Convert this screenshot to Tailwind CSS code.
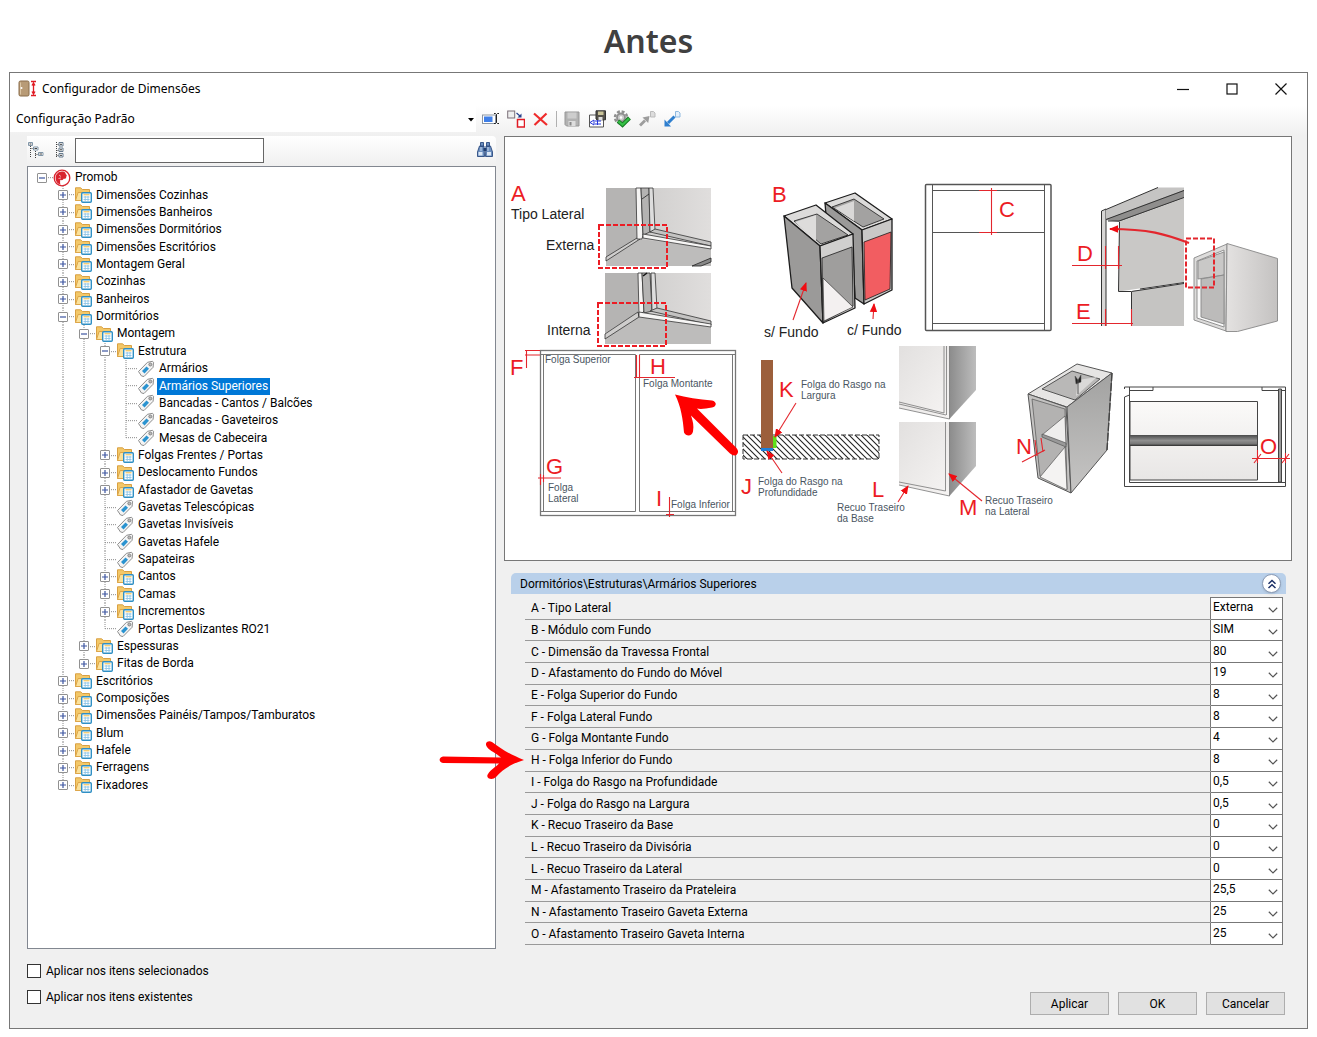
<!DOCTYPE html>
<html lang="pt-BR">
<head>
  <meta charset="UTF-8" />
  <meta name="viewport" content="width=device-width, initial-scale=1.0" />
  <title>Configurador de Dimensões</title>
  <script src="https://cdn.jsdelivr.net/npm/@tailwindcss/browser@4"></script>
</head>
<body class="bg-white font-[Roboto,sans-serif] text-[12px] text-black">

  <!-- Shared icons -->
  <svg class="hidden" aria-hidden="true">
    <symbol id="icon-folder" viewBox="0 0 18 18">
      <path d="M1.5 14.5V1.8h5.2l1.6 1.7h7.2v11z" fill="#f3c869" stroke="#d9a042" />
      <path d="M1.5 14.5l2.6-8h12.4l-2 8z" fill="#fbe19a" stroke="#dda64a" />
      <rect x="7.7" y="6.7" width="9.6" height="9.6" rx="1" fill="#fff" stroke="#2f8fc4" stroke-width="1.4" />
      <path d="M9.5 11h6M9.5 13.500h6M11.2 10v5.500M14 10v5.500" stroke="#8cc4e6" stroke-width=".9" />
      <path d="M9.5 8.8h6" stroke="#f0b93c" />
    </symbol>
    <symbol id="icon-tag" viewBox="0 0 18 18">
      <path d="M1.5 11.5L10.5 2.3l5-1 1 1-.4 5L7 16.5 4.5 16z" fill="#f4f4f4" stroke="#8d8d8d" />
      <path d="M5 11l4.5-4.6 2.5 2.4L7.5 13.5z" fill="#2a93d0" />
      <circle cx="13.3" cy="4.5" r="1.5" fill="#bbb" stroke="#777" stroke-width=".8" />
    </symbol>
    <symbol id="icon-root" viewBox="0 0 18 18">
      <circle cx="9" cy="9" r="7.8" fill="#fff" stroke="#d9232e" stroke-width="1.3" />
      <path d="M10 2.500C6 1.800 2.600 4.800 2.600 9c0 3.600 2.300 6 4.900 6.500-.8-1.800-.2-3.200-.2-4.700 1.700.8 3 .2 3.200-1 2 .2 3-.7 2.700-2 1-1 .6-2-.4-2.600C12.500 3.500 11.500 2.700 10 2.500z" fill="#d9232e" />
      <path d="M6 6l2 1.500M5.500 9.500l2.500-.5" stroke="#fff" stroke-width=".6" />
    </symbol>
    <symbol id="icon-chevron" viewBox="0 0 10 6">
      <path d="M.8.8L5 4.900 9.200.8" fill="none" stroke="#555" stroke-width="1.200" />
    </symbol>
  </svg>

  <h1 class="h-[72px] pt-[18px] pr-[20px] text-center font-['Noto_Sans',sans-serif] text-[32px] leading-[46px] font-semibold text-[#404040]">Antes</h1>

  <main class="mx-[9px] flex flex-col border border-[#777] bg-[#f0f0f0]">

    <header class="flex h-[32px] items-center bg-white pl-[8px] font-['Noto_Sans',sans-serif]">
      <svg class="h-[18px] w-[20px]" viewBox="0 0 20 18" aria-hidden="true">
        <rect x="1" y="1" width="10" height="15" rx="1.500" fill="#b89b76" stroke="#8a6d4a" />
        <path d="M2.500 2.500v12" stroke="#dcc7a6" />
        <circle cx="3.500" cy="8" r="1" fill="#fff" />
        <path d="M13 1.500h5M13 15.500h5M15.500 3v11M14 5.500L15.500 3 17 5.500M14 11.500l1.500 2.500 1.500-2.500" fill="none" stroke="#e01b24" stroke-width="1.300" />
      </svg>
      <h2 class="ml-[4px] text-[12px]">Configurador de Dimensões</h2>
      <div class="ml-auto flex pr-[2px]">
        <button class="grid h-[32px] w-[49px] place-items-center" aria-label="Minimizar">
          <svg class="size-[12px]" viewBox="0 0 12 12"><path d="M0 6.500h12" stroke="#111" stroke-width="1.200" /></svg>
        </button>
        <button class="grid h-[32px] w-[49px] place-items-center" aria-label="Maximizar">
          <svg class="size-[12px]" viewBox="0 0 12 12"><rect x="1" y="1" width="10" height="10" fill="none" stroke="#111" stroke-width="1.200" /></svg>
        </button>
        <button class="grid h-[32px] w-[49px] place-items-center" aria-label="Fechar">
          <svg class="size-[12px]" viewBox="0 0 12 12"><path d="M.5.5l11 11M11.500.5l-11 11" stroke="#111" stroke-width="1.200" /></svg>
        </button>
      </div>
    </header>

    <div class="flex h-[31px] items-center bg-linear-to-b from-white to-[#f0f0f0] pb-[3px]">
      <div class="relative h-[26px] w-[466px] bg-white">
        <select class="size-full appearance-none bg-transparent pl-[6px] font-['Noto_Sans',sans-serif] text-[12px]" aria-label="Configuração">
          <option>Configuração Padrão</option>
        </select>
        <svg class="pointer-events-none absolute top-[12px] right-[2px] h-[4px] w-[6px]" viewBox="0 0 6 4"><path d="M0 0h6L3 3.500z" /></svg>
      </div>
      <div class="flex items-center gap-[7px] pl-[6px]">
        <button aria-label="Renomear">
          <svg class="size-[18px]" viewBox="0 0 18 18">
            <rect x=".5" y="5" width="13" height="8.500" fill="#fff" stroke="#8b95a2" /><rect x="2" y="6.500" width="8.500" height="5.500" fill="#3f7fe8" />
            <path d="M12 3.500h1.500l1 1 1-1H17M12 13.500h1.500l1-1 1 1H17M14.500 4.500v8" stroke="#222" fill="none" />
          </svg>
        </button>
        <button aria-label="Duplicar">
          <svg class="size-[18px]" viewBox="0 0 18 18">
            <rect x=".7" y="1" width="7" height="7" fill="#eee" stroke="#7a6f78" />
            <rect x="10.500" y="9.500" width="7" height="7.500" fill="#fff" stroke="#e01b24" stroke-width="1.500" />
            <path d="M9.500 3l3.500 3" stroke="#27408b" stroke-width="1.200" /><path d="M14.500 3.500v4h-4z" fill="#27408b" />
          </svg>
        </button>
        <button aria-label="Excluir">
          <svg class="size-[18px]" viewBox="0 0 18 18"><path d="M2 3.500l13 11.500M14.500 3.500L2.500 15" stroke="#ef2b2b" stroke-width="2.200" /></svg>
        </button>
        <span class="-mx-[1px] h-[16px] w-px bg-[#b0b0b0]"></span>
        <button aria-label="Salvar">
          <svg class="size-[18px]" viewBox="0 0 18 18">
            <path d="M2 2h14v14H3.500L2 14.500z" fill="#b2b2b2" stroke="#969696" />
            <rect x="4.500" y="2.500" width="9" height="6" fill="#cdcdcd" /><rect x="5.500" y="11" width="7" height="5" fill="#dedede" /><rect x="6.500" y="12" width="2" height="3.500" fill="#888" />
          </svg>
        </button>
        <button aria-label="Salvar como">
          <svg class="size-[18px]" viewBox="0 0 18 18">
            <path d="M1.500 5h14v12h-14z" fill="#fff" stroke="#555" />
            <path d="M8 .8h9.500v9H9L8 9z" fill="#55524a" stroke="#333" /><rect x="10" y="1.500" width="5.500" height="3.500" fill="#c9c398" /><rect x="10.500" y="7" width="4" height="3" fill="#ddd" />
            <path d="M6 10l-4 2.500L6 15zM7 11h6M7 14h6M9.500 10v5" fill="none" stroke="#2437d8" />
          </svg>
        </button>
        <button aria-label="Validar">
          <svg class="size-[18px]" viewBox="0 0 18 18">
            <circle cx="8" cy="7.500" r="6" fill="none" stroke="#8f8f8f" stroke-width="2.500" stroke-dasharray="2.900 1.800" />
            <circle cx="8" cy="7.500" r="4" fill="#c8c8c8" stroke="#8f8f8f" stroke-width="1.800" /><circle cx="8" cy="7.500" r="1.300" fill="#fff" />
            <path d="M5 11l4.500 4 7-7" fill="none" stroke="#167a22" stroke-width="4" /><path d="M5.500 11.300l4 3.500 6.500-6.300" fill="none" stroke="#35c046" stroke-width="2.200" />
          </svg>
        </button>
        <button aria-label="Exportar">
          <svg class="size-[18px]" viewBox="0 0 18 18">
            <path d="M12.500 1.500h3l1.500 1.500v4h-4.500z" fill="#ddd" stroke="#bbb" />
            <path d="M2 15.500l5-5" stroke="#9d9d9d" stroke-width="2.800" /><path d="M4.500 7.500L11.500 6l-1.300 7z" fill="#9d9d9d" />
          </svg>
        </button>
        <button aria-label="Importar">
          <svg class="size-[18px]" viewBox="0 0 18 18">
            <path d="M12.500 1.500h3l1.500 1.500v4h-4.500z" fill="#e4f0fb" stroke="#8fb9df" />
            <path d="M11.500 6.500L5 13" stroke="#2e7fcf" stroke-width="3" /><path d="M1.500 9.500v7h6.500z" fill="#2e7fcf" />
          </svg>
        </button>
      </div>
    </div>

    <div class="flex pr-[15px] pl-[17px]">

      <!-- Tree -->
      <section class="flex w-[469px] shrink-0 flex-col">
        <div class="flex h-[30px] items-center rounded-tr bg-linear-to-b from-white to-[#f0f0f0] pb-[2px]">
          <button class="ml-[1px]" aria-label="Expandir tudo">
            <svg class="h-[18px] w-[17px]" viewBox="0 0 17 18">
              <path d="M2.500 5v12M7.500 10v7M2.500 7.500h3M7.500 13.500h3" stroke="#444" stroke-dasharray="1 1" fill="none" />
              <path d="M.5 1.500h4v3h-4zM5.500 6h4.500v3H5.500zM10.500 11.500H15v3h-4.500z" stroke="#8196a8" fill="#fff" />
              <path d="M1.500 3h2M6.500 7.500h2.500M11.500 13h2.500" stroke="#444" />
            </svg>
          </button>
          <button class="ml-[9px]" aria-label="Recolher tudo">
            <svg class="h-[18px] w-[17px]" viewBox="0 0 17 18">
              <path d="M2.500 1v16M2.500 3.500h3M2.500 9.500h3M2.500 14.500h3" stroke="#444" stroke-dasharray="1 1" fill="none" />
              <path d="M5 1.500h4v3.500H5zM5 7h4v3.500H5zM5 12.500h4V16H5z" fill="#fff" stroke="#65798c" />
              <path d="M6 3.300h2M6 8.800h2M6 14.300h2" stroke="#333" />
            </svg>
          </button>
          <input type="text" class="ml-[4px] h-[25px] w-[189px] border border-[#666] bg-white px-[4px]" aria-label="Pesquisar" />
          <button class="mr-[2px] ml-auto" aria-label="Localizar">
            <svg class="size-[18px]" viewBox="0 0 18 18">
              <path d="M4.500 1.500h3v4h-3zM10.500 1.500h3v4h-3zM3.500 5h4.500l.5 10.500h-7V11zM14.500 5H10l-.5 10.500h7V11z" fill="#6d90c0" stroke="#2b4b80" stroke-width=".9" />
              <path d="M7.500 7h3v3h-3z" fill="#1f3d70" /><path d="M2.500 11h4v3.500h-4zM11 11h4v3.500h-4z" fill="#dbe7f6" /><path d="M5 6v4M12 6v4" stroke="#c4d6ee" />
            </svg>
          </button>
        </div>

        <ul id="tree" role="tree" class="grid h-[783px] grid-rows-[repeat(36,minmax(0,1fr))] border border-[#828790] bg-white pt-[2px] pb-[154px] pl-[4px]"></ul>

      </section>

      <!-- Drawing and parameters -->
      <section class="ml-[8px] min-w-0 flex-1">
        <div class="border border-[#777] bg-white">
          <svg class="block w-full font-['Liberation_Sans',Arial,sans-serif]" viewBox="505 137 786 423" role="img" aria-label="Esquema das dimensões do armário">
            <defs>
              <linearGradient id="wall"><stop offset="0" stop-color="#c6c5c4" /><stop offset="1" stop-color="#e0dedd" /></linearGradient>
              <linearGradient id="side"><stop offset="0" stop-color="#8c8c8c" /><stop offset="1" stop-color="#bdbdbd" /></linearGradient>
              <linearGradient id="cab"><stop offset="0" stop-color="#e4e2e1" /><stop offset="1" stop-color="#c4c2c1" /></linearGradient>
              <linearGradient id="shade" x2="0" y2="1"><stop offset="0" stop-color="#a2a2a1" /><stop offset="1" stop-color="#c6c5c4" /></linearGradient>
              <linearGradient id="pale" x2="1" y2="1"><stop offset="0" stop-color="#e2e0df" /><stop offset="1" stop-color="#f6f4f3" /></linearGradient>
              <linearGradient id="drawer" x2="0" y2="1"><stop offset="0" stop-color="#fbfaf9" /><stop offset="1" stop-color="#e8e6e5" /></linearGradient>
              <linearGradient id="tube" x2="0" y2="1"><stop offset="0" stop-color="#4a4a4a" /><stop offset=".5" stop-color="#8f8f8f" /><stop offset=".8" stop-color="#777" /><stop offset="1" stop-color="#2a2a2a" /></linearGradient>
              <pattern id="hatch" width="6" height="6" patternUnits="userSpaceOnUse"><path d="M-1-1l8 8M-1 5l2 2M5-1l2 2" stroke="#222" stroke-width="1.100" /></pattern>
              <marker id="head" markerUnits="userSpaceOnUse" markerWidth="10" markerHeight="8" refX="8" refY="4" orient="auto"><path d="M0 .3L9 4 0 7.700z" fill="#f00c12" /></marker>
            </defs>

            <!-- A: tipo lateral -->
            <g stroke-width=".8" stroke-linejoin="round">
              <path d="M606 188h105v78H606z" fill="url(#wall)" />
              <path d="M606 188h31v50l-31 20z" fill="#b5b4b3" />
              <path d="M606 261l34-22 71 9v18H606z" fill="#bdbcbb" />
              <path d="M606 257l31-19 3 1-34 22z" fill="#cfcecd" stroke="#333" />
              <path d="M636 188h5l2 47-1 4h-5z" fill="#f5f4f3" stroke="#333" />
              <path d="M641 188h8l1 44-7 3z" fill="#b4b3b2" stroke="#333" />
              <path d="M649 188h4l2 42-5 2z" fill="#ddd" stroke="#333" />
              <path d="M655 229l56 13v4l-61-14z" fill="#c4c3c2" stroke="#333" />
              <path d="M643 234l68 12v3l-68-11z" fill="#f7f6f5" stroke="#333" />
              <path d="M642 199l7-5M692 266l19-8v4l-10 4z" fill="#888" stroke="#222" />

              <path d="M605 273h106v71H605z" fill="url(#wall)" />
              <path d="M605 273h33v39l-33 21z" fill="#b5b4b3" />
              <path d="M605 339l34-22 72 10v17H605z" fill="#bdbcbb" />
              <path d="M605 334l33-22 1 5-34 22z" fill="#cfcecd" stroke="#333" />
              <path d="M638 273h4l2 38-5 5z" fill="#f5f4f3" stroke="#333" />
              <path d="M642 273h8l2 38-8 2z" fill="#b4b3b2" stroke="#333" />
              <path d="M651 273h4l2 36-5 2z" fill="#ddd" stroke="#333" />
              <path d="M657 308l54 13v4l-61-14z" fill="#c4c3c2" stroke="#333" />
              <path d="M639 312l72 12v3l-72-10z" fill="#f7f6f5" stroke="#333" />
              <path d="M643 276l4-3" stroke="#111" stroke-width="1.500" />
            </g>
            <g fill="none" stroke="#ec1c24" stroke-width="2" stroke-dasharray="5 2">
              <rect x="599" y="225" width="68" height="43" />
              <rect x="598" y="303" width="68" height="43" />
            </g>

            <!-- B: com ou sem fundo -->
            <g stroke="#1c1c1c" stroke-width="1.300" stroke-linejoin="round">
              <path d="M825 203l30-10 37 26-30 11z" fill="#dcdbda" />
              <path d="M832 207l22-8 30 20-21 8z" fill="#a3a2a1" stroke-width=".8" />
              <path d="M835 208l19-7v20z" fill="#d9d8d7" stroke="none" />
              <path d="M825 203l37 27 2 74-9-6-3-64-26-19z" fill="#9b9a99" />
              <path d="M862 230l30-11v71l-28 14z" fill="#c9c8c7" />
              <path d="M864 242l27-10-1 57-25 11z" fill="#f25d61" stroke-width=".8" />
              <path d="M784 216l32-11 37 29-33 12z" fill="#dcdbda" />
              <path d="M794 221l23-7 31 21-27 9z" fill="#a3a2a1" stroke-width=".8" />
              <path d="M795 222l21-7v27z" fill="#dddcdb" stroke="none" />
              <path d="M784 216l36 30 3 77-31-35z" fill="#9b9a99" />
              <path d="M820 246l33-12 2 74-32 15z" fill="#d0cfce" />
              <path d="M822 258l30-11 1 59-30 16z" fill="#9f9e9d" stroke-width=".8" />
              <path d="M823 278l30 29-29 14z" fill="#f3f0f0" stroke-width=".6" />
            </g>

            <!-- C: travessa frontal -->
            <g fill="none" stroke="#555">
              <rect x="925.500" y="184.500" width="125.500" height="146" stroke-width="1.500" rx="1" />
              <path d="M932.500 185v145M1044.500 185v145M932 190.500h113M932 232.500h113M932 323.500h113" />
            </g>

            <!-- D / E: afastamento e folga superior -->
            <g stroke="#333" stroke-linejoin="round">
              <path d="M1101.500 326V211l4.500-2v117" fill="#d8d7d6" />
              <path d="M1106 219v-9.500l52-22h26v3z" fill="#c5c4c3" stroke="none" />
              <path d="M1106 219l78-29v8l-65 24-13-2z" fill="#8f8e8d" stroke="none" />
              <path d="M1119 222l65-24v84l-65 9.500z" fill="#c9c8c6" stroke="none" />
              <path d="M1131.500 291l52.500-7v42h-52.500z" fill="#c5c4c2" stroke="none" />
              <path d="M1106 209.500l52-22M1106 219.500l78-29M1108 221h11l65-23.500M1119.500 222l-1 69.500h13l52.500-8M1140 289l44-6.500M1131.500 292v34" fill="none" />
            </g>
            <g stroke="#888" stroke-width=".9" stroke-linejoin="round">
              <path d="M1194 258l33-14-1 87-32-11z" fill="#dddcdb" />
              <path d="M1197 261l27-11v77l-27-9z" fill="#fafafa" />
              <path d="M1198 261l26-9v23l-26 4z" fill="#c9c8c7" />
              <path d="M1201 279l23-4v49l-23-7z" fill="#bcbbba" />
              <path d="M1227 243.500l50.500 15V321l-40 10.500H1226z" fill="url(#cab)" />
            </g>

            <!-- F a I: folgas -->
            <g fill="none" stroke="#777">
              <rect x="540.500" y="350.500" width="195" height="165" stroke-width="1.300" />
              <path d="M543.500 354.500h92v157h-92zM639.500 354.500h93v157h-93zM540 354.500h4M540 511.500h4M732 354.500h3M732 511.500h3" />
            </g>

            <!-- J / K: rasgo -->
            <rect x="743" y="435" width="136" height="24" fill="url(#hatch)" stroke="#333" stroke-dasharray="5 2" />
            <path d="M761 360h12v88h-12z" fill="#9c5f3b" />
            <path d="M761 448h12v3h-12z" fill="#1e7fd8" />
            <path d="M773 436h3.500v12H773z" fill="#5ee01a" />

            <!-- L / M: recuos -->
            <g stroke="#777" stroke-width=".8">
              <path d="M899 346h51v73l-51-11z" fill="url(#pale)" stroke="none" />
              <path d="M949.500 346H976v44l-26.500 29z" fill="url(#side)" stroke="none" />
              <path d="M899 402l45 11V346M899 404l47 11M899 408l50.500 11V346M946.500 346v69" fill="none" />
              <path d="M899 422h51v74l-51-11z" fill="url(#pale)" stroke="none" />
              <path d="M949.500 422H976v44l-26.500 30z" fill="url(#side)" stroke="none" />
              <path d="M899 482l46.500 9V422M899 485l50.500 11v-74" fill="none" />
            </g>

            <!-- N: prateleira -->
            <g stroke="#555" stroke-linejoin="round">
              <path d="M1028 394l49-30 35 9-45 34z" fill="#e6e5e4" />
              <path d="M1042 389l30-18 28 8-25 21z" fill="#b9b8b7" />
              <path d="M1078 380l19-3-21 19z" fill="#dad9d8" stroke="none" />
              <path d="M1028 394l38 13 5 86-33-15z" fill="#c4c3c2" />
              <path d="M1032 399l33 10 2 80-27-13z" fill="#b3b2b1" stroke-width=".7" />
              <path d="M1042 435l23-19 1 29z" fill="#efeeed" stroke-width=".7" />
              <path d="M1040 477l25-30 2 43z" fill="#f4f3f2" stroke-width=".7" />
              <path d="M1042 434l24 9v4l-24-10z" fill="#999" stroke-width=".7" />
              <path d="M1067 407l45-34-5 77-36 43z" fill="url(#shade)" />
              <path d="M1075 376l3 4 3-5v7l-5 2z" fill="#222" stroke-width=".5" />
              <path d="M1078 380v14" />
              <path d="M1112 373l-5 77" stroke="#444" stroke-width="1.400" stroke-dasharray="8 2" />
            </g>

            <!-- O: gaveta interna -->
            <g fill="none" stroke="#444">
              <path d="M1124.500 389v-2H1285.500v99.500H1124.500V397l5-2M1129.500 387v95.500h156M1129.500 390.500h23.500v-3.500M1262 387v3.500h23.500" />
              <path d="M1130 401.500h127.500V480H1130z" fill="url(#drawer)" />
              <path d="M1130 435h127v11H1130z" fill="url(#tube)" stroke="none" />
              <path d="M1278.500 389h3v93h-3z" fill="#999" />
            </g>

            <!-- Cotas -->
            <g fill="none" stroke="#e3262d" stroke-width="1.100">
              <path d="M991.500 188v47M979 190.500h18M979 232.500h18" />
              <path d="M1072 265.500h50M1072 323.500h61M1105.500 246v23M1118.500 246v23M1105.500 309v17M1131.500 309v17" />
              <path d="M525 350.500h15M525 355h15M526.500 350v18M636.500 355v23M639.500 355v23M634 377.500h41M538 478h23M540.500 474v11M543.500 475v7M669.500 497v20M666 514.500h8" />
              <path d="M1022 462l23-12M1035 440l2 16M1041 438l2 14" />
              <path d="M1252 458.500h38M1257.500 450v13M1254 463l7-9M1285.500 453v10M1282 463l7-9" />
              <g marker-end="url(#head)">
                <path d="M793 320l13-37" />
                <path d="M873 319l1-15" />
                <path d="M796 403l-21 34" />
                <path d="M782 473l-15-22" />
                <path d="M898 502l10-16" />
                <path d="M982 501l-33-27" />
              </g>
              <path d="M1189 243c-24-9-40-14-79-14" stroke-width="2.200" marker-end="url(#head)" />
              <rect x="1186" y="238.500" width="28" height="49" stroke-width="2" stroke-dasharray="5 2" />
            </g>
            <path d="M675 394.500c11 3 24 5 37 6 5 1 5 6 0 7-6 1-11 2-15 1l39 39c5 5 0 11-6 6l-39-38c2 6 3 10 2 16-1 5-7 5-9 1-1-13-3-26-9-38z" fill="#f00" />

            <g fill="#ec1c24" font-size="22">
              <text x="511" y="201">A</text>
              <text x="772" y="202">B</text>
              <text x="999" y="217">C</text>
              <text x="1077" y="261">D</text>
              <text x="1076" y="319">E</text>
              <text x="510" y="375">F</text>
              <text x="546" y="474">G</text>
              <text x="650" y="374">H</text>
              <text x="656" y="506">I</text>
              <text x="741" y="494">J</text>
              <text x="779" y="397">K</text>
              <text x="872" y="497">L</text>
              <text x="959" y="515">M</text>
              <text x="1016" y="454">N</text>
              <text x="1260" y="454">O</text>
            </g>
            <g fill="#222" font-size="14">
              <text x="511" y="219">Tipo Lateral</text>
              <text x="546" y="250">Externa</text>
              <text x="547" y="335">Interna</text>
              <text x="764" y="337">s/ Fundo</text>
              <text x="847" y="335">c/ Fundo</text>
            </g>
            <g fill="#4a555f" font-size="10">
              <text x="545" y="363">Folga Superior</text>
              <text x="643" y="387">Folga Montante</text>
              <text x="548" y="491">Folga</text>
              <text x="548" y="502">Lateral</text>
              <text x="671" y="508">Folga Inferior</text>
              <text x="801" y="388">Folga do Rasgo na</text>
              <text x="801" y="399">Largura</text>
              <text x="758" y="485">Folga do Rasgo na</text>
              <text x="758" y="496">Profundidade</text>
              <text x="837" y="511">Recuo Traseiro</text>
              <text x="837" y="522">da Base</text>
              <text x="985" y="504">Recuo Traseiro</text>
              <text x="985" y="515">na Lateral</text>
            </g>
          </svg>
        </div>

        <div class="mt-[12px] mr-[6px] ml-[7px] flex h-[21px] items-center justify-between rounded-t-[5px] bg-[#b9d0ea] pr-[5px] pl-[9px]">
          <h3>Dormitórios\Estruturas\Armários Superiores</h3>
          <button class="grid size-[19px] place-items-center rounded-full border border-[#8b9bb5] bg-white shadow" aria-label="Recolher grupo">
            <svg class="size-[10px]" viewBox="0 0 10 10"><path d="M1.500 4.800L5 1.500l3.500 3.300M1.500 9L5 5.700 8.500 9" fill="none" stroke="#1b2f66" stroke-width="1.500" /></svg>
          </button>
        </div>

        <div class="mt-[3px] mr-[9px] ml-[21px]">
          <table class="h-[348px] w-full border-collapse">
            <tbody id="params"></tbody>
          </table>
        </div>
      </section>
    </div>

    <footer class="flex items-end justify-between pt-[12px] pr-[22px] pb-[13px] pl-[17px]">
      <div class="flex flex-col gap-[6px] pb-[8px]">
        <label class="flex h-[20px] items-center gap-[5px]"><input type="checkbox" class="size-[14px] appearance-none border border-[#333] bg-white" />Aplicar nos itens selecionados</label>
        <label class="flex h-[20px] items-center gap-[5px]"><input type="checkbox" class="size-[14px] appearance-none border border-[#333] bg-white" />Aplicar nos itens existentes</label>
      </div>
      <div class="flex gap-[9px]">
        <button class="h-[23px] w-[79px] border border-[#adadad] bg-[#e1e1e1]">Aplicar</button>
        <button class="h-[23px] w-[79px] border border-[#adadad] bg-[#e1e1e1]">OK</button>
        <button class="h-[23px] w-[79px] border border-[#adadad] bg-[#e1e1e1]">Cancelar</button>
      </div>
    </footer>
  </main>

  <script>
    // [level, type, label]; type: "-" open, "+" closed, "t" item
    const nodes = [
      [0, "-", "Promob"],
      [1, "+", "Dimensões Cozinhas"],
      [1, "+", "Dimensões Banheiros"],
      [1, "+", "Dimensões Dormitórios"],
      [1, "+", "Dimensões Escritórios"],
      [1, "+", "Montagem Geral"],
      [1, "+", "Cozinhas"],
      [1, "+", "Banheiros"],
      [1, "-", "Dormitórios"],
      [2, "-", "Montagem"],
      [3, "-", "Estrutura"],
      [4, "t", "Armários"],
      [4, "t", "Armários Superiores"],
      [4, "t", "Bancadas - Cantos / Balcões"],
      [4, "t", "Bancadas - Gaveteiros"],
      [4, "t", "Mesas de Cabeceira"],
      [3, "+", "Folgas Frentes / Portas"],
      [3, "+", "Deslocamento Fundos"],
      [3, "+", "Afastador de Gavetas"],
      [3, "t", "Gavetas Telescópicas"],
      [3, "t", "Gavetas Invisíveis"],
      [3, "t", "Gavetas Hafele"],
      [3, "t", "Sapateiras"],
      [3, "+", "Cantos"],
      [3, "+", "Camas"],
      [3, "+", "Incrementos"],
      [3, "t", "Portas Deslizantes RO21"],
      [2, "+", "Espessuras"],
      [2, "+", "Fitas de Borda"],
      [1, "+", "Escritórios"],
      [1, "+", "Composições"],
      [1, "+", "Dimensões Painéis/Tampos/Tamburatos"],
      [1, "+", "Blum"],
      [1, "+", "Hafele"],
      [1, "+", "Ferragens"],
      [1, "+", "Fixadores"],
    ];
    const selected = "Armários Superiores";
    const step = 21;

    // true when the branch at this level goes on below row i
    function continues(i, level) {
      for (let j = i + 1; j < nodes.length; j++) {
        if (nodes[j][0] < level) return false;
        if (nodes[j][0] === level) return true;
      }
      return false;
    }

    document.getElementById("tree").innerHTML = nodes.map(([level, type, label], i) => {
      let lines = "";
      for (let k = 1; k <= level; k++) {
        const x = k * step + 10;
        if (continues(i, k)) lines += `<line x1="${x}" x2="${x}" y1="0" y2="100%" />`;
        else if (k === level) lines += `<line x1="${x}" x2="${x}" y1="0" y2="50%" />`;
      }
      const x = level * step + 10;
      lines += `<line x1="${x}" x2="${x + 12}" y1="50%" y2="50%" />`;
      const leaf = type === "t";
      const icon = level === 0 ? "root" : leaf ? "tag" : "folder";
      const pad = leaf ? (level + 1) * step : level * step + 5;
      const toggle = leaf ? "" : `
        <button class="mr-[6px] grid size-[10px] shrink-0 place-items-center rounded-[1px] border border-[#919191] bg-white" aria-label="${type === "-" ? "Recolher" : "Expandir"} ${label}">
          <svg class="size-[6px]" viewBox="0 0 6 6"><path d="${type === "-" ? "M0 3h6" : "M0 3h6M3 0v6"}" stroke="#3c55a0" stroke-width="1.200" /></svg>
        </button>`;
      const mark = label === selected ? "bg-[#0078d7] text-white" : "";
      return `
      <li role="treeitem" class="relative flex min-h-0 items-center" style="padding-left:${pad}px">
        <svg class="pointer-events-none absolute inset-0 size-full" stroke="#8a8a8a" stroke-dasharray="1 1">${lines}</svg>
        <span class="relative flex items-center">${toggle}<svg class="mr-[2px] size-[18px] shrink-0"><use href="#icon-${icon}" /></svg><span class="px-[2px] leading-[17px] whitespace-nowrap ${mark}">${label}</span></span>
      </li>`;
    }).join("");

    const params = [
      ["A - Tipo Lateral", "Externa"],
      ["B - Módulo com Fundo", "SIM"],
      ["C - Dimensão da Travessa Frontal", "80"],
      ["D - Afastamento do Fundo do Móvel", "19"],
      ["E - Folga Superior do Fundo", "8"],
      ["F - Folga Lateral Fundo", "8"],
      ["G - Folga Montante Fundo", "4"],
      ["H - Folga Inferior do Fundo", "8"],
      ["I - Folga do Rasgo na Profundidade", "0,5"],
      ["J - Folga do Rasgo na Largura", "0,5"],
      ["K - Recuo Traseiro da Base", "0"],
      ["L - Recuo Traseiro da Divisória", "0"],
      ["L - Recuo Traseiro da Lateral", "0"],
      ["M - Afastamento Traseiro da Prateleira", "25,5"],
      ["N - Afastamento Traseiro Gaveta Externa", "25"],
      ["O - Afastamento Traseiro Gaveta Interna", "25"],
    ];

    const arrow = `
      <svg class="pointer-events-none absolute top-1/2 right-full h-[40px] w-[86px] -translate-y-1/2" viewBox="0 0 86 40">
        <path d="M4 16.500L62 17.500C57 13 51 11 48 7C45 3 49 0 53 2C62 9 72 15 85 20C72 24 64 29 57 37C53 41 46 38 49 34C52 29 57 27 60 23.500L4 23C-1 22 0 17 4 16.500Z" fill="#f00" />
      </svg>`;

    document.getElementById("params").innerHTML = params.map(([label, value], i) => `
      <tr>
        <td class="relative border-b border-[#999] p-0 pl-[6px] leading-[16px]">${label[0] === "H" ? arrow : ""}<label for="p${i}">${label}</label></td>
        <td class="w-[72px] border border-[#777] bg-white p-0">
          <div class="relative">
            <select id="p${i}" class="block h-[18px] w-full appearance-none bg-transparent pb-[2px] pl-[2px] leading-[16px]"><option>${value}</option></select>
            <svg class="pointer-events-none absolute right-[4px] bottom-[4px] h-[6px] w-[10px]"><use href="#icon-chevron" /></svg>
          </div>
        </td>
      </tr>`).join("");
  </script>
</body>
</html>
